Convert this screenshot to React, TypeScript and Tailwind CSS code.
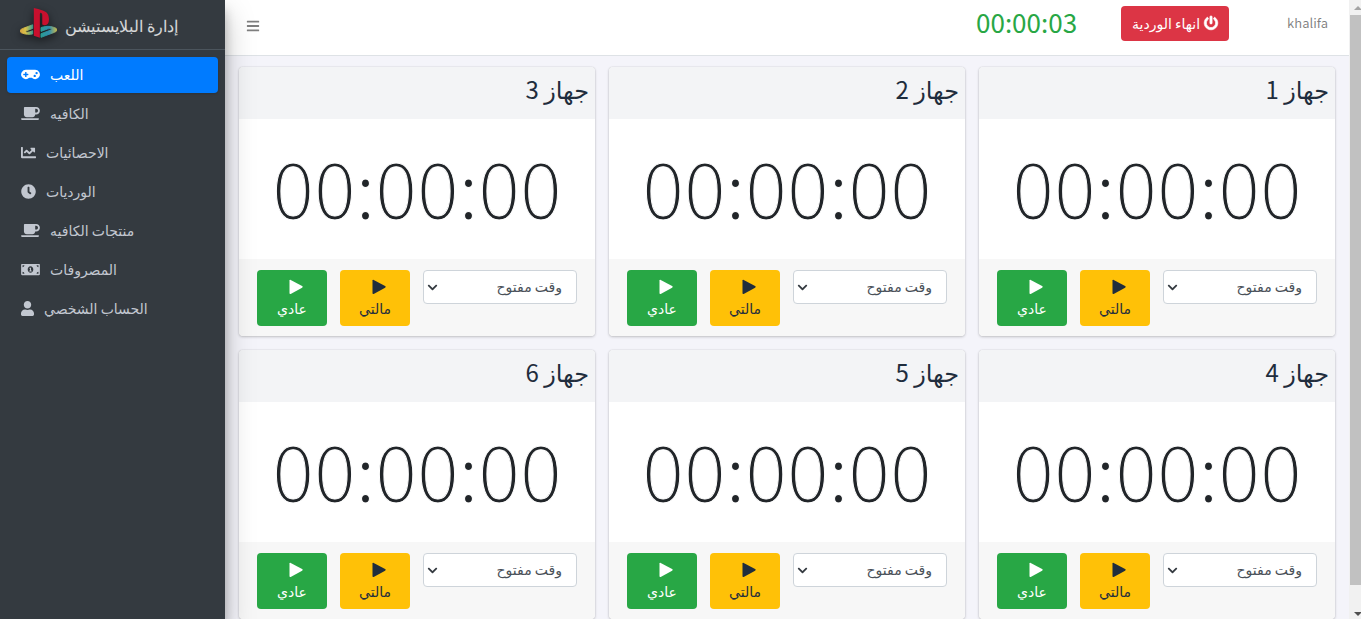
import React, { useState } from 'react';
import { FaBars, FaChartLine, FaChevronDown, FaClock, FaCoffee, FaGamepad, FaMoneyBillAlt, FaPowerOff, FaUser } from 'react-icons/fa';

const MENU = [
  { label: 'اللعب', icon: FaGamepad, size: 'h-[15px] w-[19px]' },
  { label: 'الكافيه', icon: FaCoffee, size: 'h-[15px] w-[19px]' },
  { label: 'الاحصائيات', icon: FaChartLine, size: 'h-[15px] w-[15px]' },
  { label: 'الورديات', icon: FaClock, size: 'h-[15px] w-[15px]' },
  { label: 'منتجات الكافيه', icon: FaCoffee, size: 'h-[15px] w-[19px]' },
  { label: 'المصروفات', icon: FaMoneyBillAlt, size: 'h-[15px] w-[19px]' },
  { label: 'الحساب الشخصي', icon: FaUser, size: 'h-[15px] w-[13px]' }
];

const DEVICES = [1, 2, 3, 4, 5, 6];

function Logo() {
  return (
    <svg viewBox="0 32 576 448" preserveAspectRatio="none" className="mb-1 h-[30px] w-[37px] drop-shadow-[0_3px_4px_rgba(0,0,0,0.6)]" aria-hidden="true">
      <defs>
        <linearGradient id="left" x1="0" x2="1">
          <stop offset="0" stopColor="#d9a441" />
          <stop offset="0.45" stopColor="#d8c24a" />
          <stop offset="1" stopColor="#3f9d8f" />
        </linearGradient>
        <linearGradient id="right" x1="0" x2="1">
          <stop offset="0" stopColor="#2a9c92" />
          <stop offset="0.5" stopColor="#2f8fae" />
          <stop offset="1" stopColor="#c9b94c" />
        </linearGradient>
      </defs>
      <path fill="url(#right)" stroke="url(#right)" strokeWidth="14" d="M570.9 372.3c-11.3 14.2-38.8 24.3-38.8 24.3L327 470.2v-54.3l150.9-53.8c17.1-6.1 19.8-14.8 5.8-19.4-13.9-4.6-39.1-3.3-56.2 2.9L327 381.1v-56.4c23.2-7.8 47.1-13.6 75.7-16.8 40.9-4.5 90.9.6 130.2 15.5 44.2 14 49.2 34.7 38 48.9z" />
      <path fill="url(#left)" stroke="url(#left)" strokeWidth="14" d="M43.2 410.2c-45.4-12.8-53-39.5-32.3-54.8 19.1-14.2 51.7-24.9 51.7-24.9l134.5-47.8v54.5l-96.8 34.6c-17.1 6.1-19.7 14.8-5.8 19.4 13.9 4.6 39.1 3.3 56.2-2.9l46.4-16.9v48.8c-51.6 9.3-101.4 7.3-153.9-10z" />
      <path fill="#c8102e" d="M346.5 279.8v-139c0-16.3-3-31.3-18.3-35.6-11.7-3.8-19 7.1-19 23.4v347.9l-93.8-29.8V32c39.9 7.4 98 24.9 129.2 35.4C424.1 94.7 451 128.7 451 205.2c0 74.5-46 102.8-104.5 74.6z" />
    </svg>
  );
}

function PlayIcon() {
  return (
    <svg viewBox="0 0 14 16" className="mb-px ml-[7px] h-4 w-3.5" fill="currentColor" aria-hidden="true">
      <path d="M.5 1.6c0-.7.6-1 1.2-.7l11.4 6.2c.7.4.7 1.2 0 1.6L1.7 14.9c-.6.3-1.2 0-1.2-.7z" />
    </svg>
  );
}

function Sidebar() {
  const [active, setActive] = useState(0);

  return (
    <aside className="relative z-10 flex w-[225px] shrink-0 flex-col bg-[#343a40] shadow-[0_14px_28px_rgba(0,0,0,0.25),0_10px_10px_rgba(0,0,0,0.22)]">
      <a href="#" className="flex h-[50px] items-center gap-2 border-b border-[#4b545c] pl-5 text-base font-light text-white/80">
        <Logo />
        <span dir="rtl">إدارة البلايستيشن</span>
      </a>
      <nav className="flex flex-col gap-[3px] p-[7px]">
        {MENU.map(({ label, icon: Icon, size }, i) => (
          <a
            key={label}
            href="#"
            onClick={() => setActive(i)}
            className={
              i === active
                ? 'flex h-9 items-center gap-[10px] rounded bg-[#007bff] px-[14px] pb-0.5 text-sm text-white shadow-sm'
                : 'flex h-9 items-center gap-[10px] rounded px-[14px] pb-0.5 text-sm text-[#c2c7d0]'
            }
          >
            <Icon className={size} />
            <span dir="rtl">{label}</span>
          </a>
        ))}
      </nav>
    </aside>
  );
}

function Navbar() {
  return (
    <header className="flex h-14 shrink-0 items-start border-b border-[#dee2e6] bg-white pr-[21px] pl-[21px]">
      <button type="button" aria-label="القائمة" className="mt-[19px] text-black/50">
        <FaBars size={14} />
      </button>
      <div className="ml-auto flex h-[47px] items-center">
        <span className="pb-1 text-[26px] text-[#28a745]">00:00:03</span>
        <button type="button" dir="rtl" className="ml-11 flex h-[35px] w-[108px] items-center justify-center gap-1 rounded bg-[#dc3545] pb-0.5 text-sm text-white">
          <FaPowerOff size={14} className="overflow-visible stroke-current stroke-[24px]" />
          انهاء الوردية
        </button>
        <a href="#" className="ml-[58px] pb-0.5 text-[13px] text-black/50">khalifa</a>
      </div>
    </header>
  );
}

function DeviceCard({ id }: { id: number }) {
  return (
    <section className="rounded bg-white shadow-[0_0_1px_rgba(0,0,0,0.25),0_1px_3px_rgba(0,0,0,0.2)]">
      <h2 className="flex h-[52px] items-center rounded-t bg-[#f3f4f6] px-1.5 pb-2 text-2xl text-[#1f2d3d]">
        جهاز {id}
      </h2>
      <div dir="ltr" className="flex h-[140px] items-center justify-center pb-2 text-[78px] font-light text-[#212529] [-webkit-text-stroke:1px_white]">
        00:00:00
      </div>
      <div className="flex h-[77px] items-start gap-[13px] rounded-b bg-[#f7f7f7] px-[18px] pt-[11px]">
        <div className="relative flex-1">
          <select aria-label={`وقت جهاز ${id}`} className="h-[34px] w-full appearance-none rounded border border-[#ced4da] bg-white px-[14px] pb-0.5 text-sm text-[#495057]">
            <option>وقت مفتوح</option>
          </select>
          <FaChevronDown size={11} className="pointer-events-none absolute top-3 left-1 text-[#343a40]" />
        </div>
        <button type="button" className="flex h-14 w-[70px] flex-col items-center justify-center gap-0.5 rounded bg-[#ffc107] text-sm text-[#1f2d3d]">
          <PlayIcon />
          مالتي
        </button>
        <button type="button" className="flex h-14 w-[70px] flex-col items-center justify-center gap-0.5 rounded bg-[#28a745] text-sm text-white">
          <PlayIcon />
          عادي
        </button>
      </div>
    </section>
  );
}

function ScrollRail() {
  return (
    <div className="flex w-3 shrink-0 flex-col bg-[#f1f1f1]">
      <svg viewBox="0 0 12 15" className="h-[15px] w-3"><path d="M5 10l4-4 4 4z" fill="#a3a3a3" /></svg>
      <div className="ml-px grow bg-[#c1c1c1]" />
      <div className="h-[19px]" />
      <svg viewBox="0 0 12 15" className="h-[15px] w-3"><path d="M5 8l4 4 4-4z" fill="#505050" /></svg>
    </div>
  );
}

export default function App() {
  return (
    <div className="flex h-screen overflow-hidden bg-[#f4f4fa] font-['Noto_Sans_CJK_JP','DejaVu_Sans',sans-serif]">
      <Sidebar />
      <div className="flex min-w-0 flex-1 flex-col">
        <Navbar />
        <main dir="rtl" className="grid grid-cols-3 gap-[14px] px-[14px] pt-[11px]">
          {DEVICES.map(id => (
            <DeviceCard key={id} id={id} />
          ))}
        </main>
      </div>
      <ScrollRail />
    </div>
  );
}
